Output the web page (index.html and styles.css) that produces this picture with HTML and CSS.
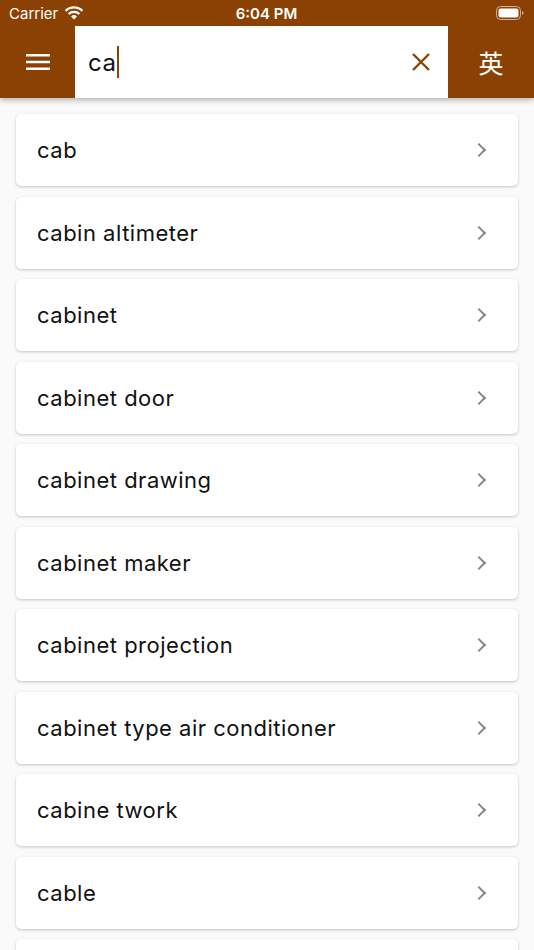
FILE: index.html
```html
<!DOCTYPE html>
<html lang="en">
<head>
    <meta charset="UTF-8">
    <meta name="viewport" content="width=device-width, initial-scale=1.0">
    <title>Dictionary Search</title>
    <link rel="stylesheet" href="styles.css">
</head>
<body>
<div class="header">
    <div class="status-bar">
        <div class="status-left">
            <span>Carrier</span>
            <svg class="wifi" width="20" height="14" viewBox="0 0 20 14">
                <path d="M10 13.5 L7 10.4 A4.4 4.4 0 0 1 13 10.4 Z" fill="#fff"/>
                <path d="M4.6 8 A7.8 7.8 0 0 1 15.4 8" stroke="#fff" stroke-width="2.2" fill="none"/>
                <path d="M1.6 4.9 A12 12 0 0 1 18.4 4.9" stroke="#fff" stroke-width="2.2" fill="none"/>
            </svg>
        </div>
        <div class="status-time">6:04 PM</div>
        <div class="status-right">
            <svg width="28" height="14" viewBox="0 0 28 14">
                <rect x="0.5" y="0.5" width="24" height="13" rx="4" fill="none" stroke="#d9b08a" stroke-width="1"/>
                <rect x="2.5" y="2.5" width="20" height="9" rx="2" fill="#fff"/>
                <path d="M26 5 Q27.5 5.5 27.5 7 Q27.5 8.5 26 9 Z" fill="#d9b08a"/>
            </svg>
        </div>
    </div>
    <div class="toolbar">
        <div class="menu-btn">
            <svg width="24" height="18" viewBox="0 0 24 18">
                <rect x="0" y="1" width="24" height="2.5" fill="#fff"/>
                <rect x="0" y="7.75" width="24" height="2.5" fill="#fff"/>
                <rect x="0" y="14.5" width="24" height="2.5" fill="#fff"/>
            </svg>
        </div>
        <div class="search-box">
            <span class="search-text">ca</span><span class="cursor"></span>
            <svg class="clear-btn" width="20" height="20" viewBox="0 0 20 20">
                <path d="M2 2 L18 18 M18 2 L2 18" stroke="#8b4103" stroke-width="2.4"/>
            </svg>
        </div>
        <div class="lang-btn">英</div>
    </div>
</div>

<div class="word-list">
    <div class="word-card"><span>cab</span><span class="chevron"></span></div>
    <div class="word-card"><span>cabin altimeter</span><span class="chevron"></span></div>
    <div class="word-card"><span>cabinet</span><span class="chevron"></span></div>
    <div class="word-card"><span>cabinet door</span><span class="chevron"></span></div>
    <div class="word-card"><span>cabinet drawing</span><span class="chevron"></span></div>
    <div class="word-card"><span>cabinet maker</span><span class="chevron"></span></div>
    <div class="word-card"><span>cabinet projection</span><span class="chevron"></span></div>
    <div class="word-card"><span>cabinet type air conditioner</span><span class="chevron"></span></div>
    <div class="word-card"><span>cabine twork</span><span class="chevron"></span></div>
    <div class="word-card"><span>cable</span><span class="chevron"></span></div>
    <div class="word-card"></div>
</div>
</body>
</html>
```

FILE: styles.css
```css
body {
  margin: 0;
  font-family: Inter, "Noto Sans", "Noto Sans CJK SC", sans-serif;
  background-color: #fafafa;
  height: 950px;
  overflow: hidden;
}

.header {
  position: relative;
  z-index: 2;
  background-color: #8b4103;
  height: 98px;
  box-shadow: 0 2px 6px rgba(0, 0, 0, 0.3);
}

.status-bar {
  height: 26px;
  display: flex;
  align-items: center;
  justify-content: space-between;
  color: #fff;
  font-size: 15px;
  padding: 0 10px 0 9px;
}

.status-left {
  display: flex;
  align-items: center;
  gap: 6px;
  width: 120px;
}

.status-time {
  font-weight: 600;
}

.status-right {
  width: 120px;
  display: flex;
  justify-content: flex-end;
}

.toolbar {
  height: 72px;
  display: flex;
}

.menu-btn {
  width: 75px;
  display: flex;
  align-items: center;
  justify-content: center;
}

.search-box {
  flex: 1;
  background-color: #fff;
  display: flex;
  align-items: center;
  padding: 0 17px 0 13px;
}

.search-text {
  font-size: 24px;
  letter-spacing: 0.5px;
  color: #111;
}

.cursor {
  width: 2px;
  height: 32px;
  background-color: #8b4103;
  margin-left: 1px;
}

.clear-btn {
  margin-left: auto;
}

.lang-btn {
  width: 86px;
  display: flex;
  align-items: center;
  justify-content: center;
  color: #fff;
  font-size: 25px;
  font-family: "Noto Sans CJK SC", sans-serif;
}

.word-list {
  display: flex;
  flex-direction: column;
  gap: 10.5px;
  padding: 16px 16px 0 16px;
}

.word-card {
  flex: none;
  height: 72px;
  background-color: #fff;
  border-radius: 5px;
  box-shadow: 0 1px 3px rgba(0, 0, 0, 0.22);
  display: flex;
  align-items: center;
  justify-content: space-between;
  padding: 0 34px 0 21px;
  font-size: 22px;
  letter-spacing: 0.5px;
  color: #111;
}

.chevron {
  width: 8px;
  height: 8px;
  border-top: 2.2px solid #888;
  border-right: 2.2px solid #888;
  transform: rotate(45deg);
}
```
